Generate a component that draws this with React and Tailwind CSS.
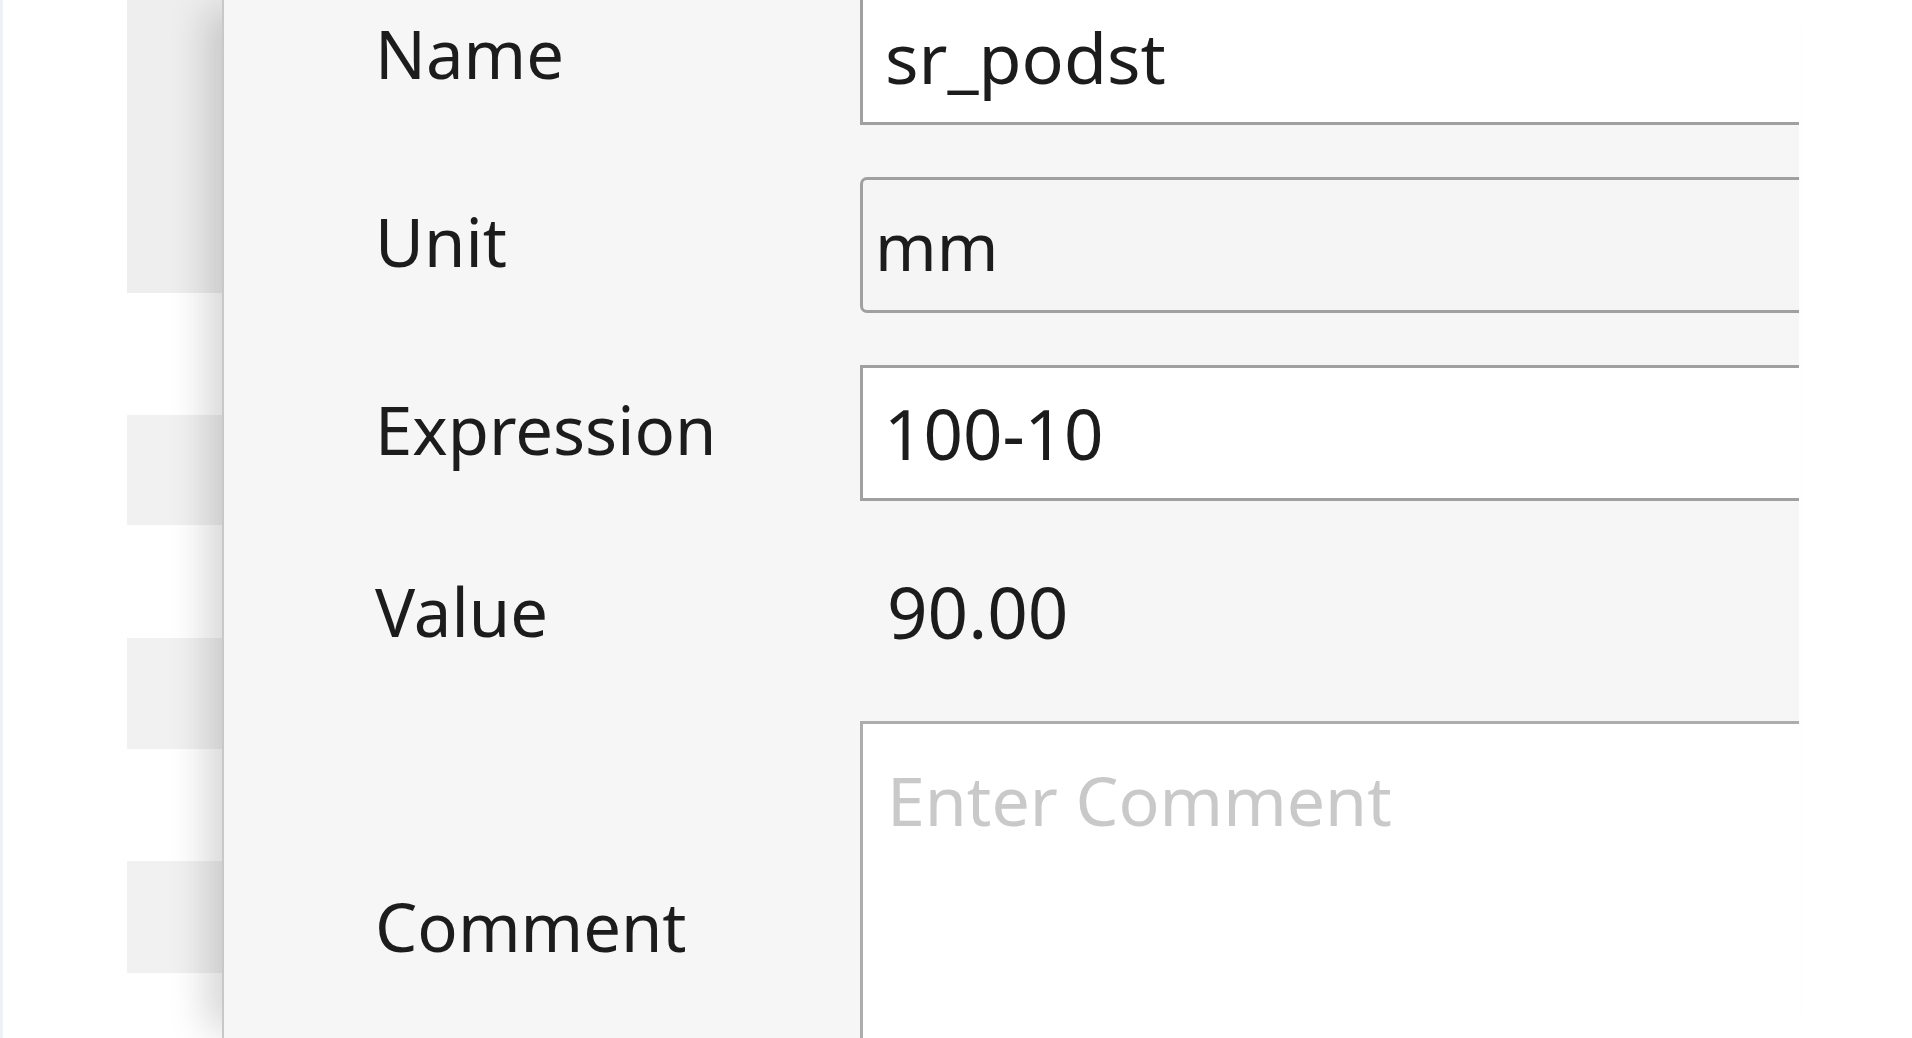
import React from 'react';

const stripes = [
  { h: 'h-[293px]', bg: 'bg-[#eeeeee]' },
  { h: 'h-[122px]', bg: 'bg-white' },
  { h: 'h-[110px]', bg: 'bg-[#f1f1f1]' },
  { h: 'h-[113px]', bg: 'bg-white' },
  { h: 'h-[111px]', bg: 'bg-[#f1f1f1]' },
  { h: 'h-[112px]', bg: 'bg-white' },
  { h: 'h-[112px]', bg: 'bg-[#f1f1f1]' },
  { h: 'h-[120px]', bg: 'bg-white' },
];

const Label = ({ children, className = '' }) => (
  <div className={`w-[485px] shrink-0 text-[67px] leading-none text-[#1c1c1c] ${className}`}>
    {children}
  </div>
);

const ParameterForm = () => (
  <div className="flex-1 flex flex-col pl-[151px] -mt-[11px]">
    <div className="flex items-center shrink-0 h-[136px]">
      <Label className="pb-[7px]">Name</Label>
      <input
        readOnly
        value="sr_podst"
        className="w-[980px] shrink-0 h-[136px] bg-white border-[3px] border-[#a0a0a0] pl-[22px] text-[70px] text-[#1c1c1c] outline-none"
      />
    </div>

    <div className="flex items-center shrink-0 h-[136px] mt-[52px]">
      <Label className="pb-[7px]">Unit</Label>
      <input
        readOnly
        value="mm"
        className="w-[980px] shrink-0 h-[136px] bg-[#f5f5f5] border-[3px] border-[#a0a0a0] rounded-[7px] pl-[12px] text-[66px] text-[#1c1c1c] outline-none"
      />
    </div>

    <div className="flex items-center shrink-0 h-[136px] mt-[52px]">
      <Label className="pb-[7px]">Expression</Label>
      <input
        readOnly
        value="100-10"
        className="w-[980px] shrink-0 h-[136px] bg-white border-[3px] border-[#a0a0a0] pl-[21px] text-[69px] text-[#1c1c1c] outline-none"
      />
    </div>

    <div className="flex items-center shrink-0 h-[220px]">
      <Label>Value</Label>
      <div className="pl-[27px] text-[71px] leading-none text-[#1c1c1c]">90.00</div>
    </div>

    <div className="flex items-center shrink-0 h-[410px]">
      <Label>Comment</Label>
      <textarea
        readOnly
        placeholder="Enter Comment"
        className="w-[980px] shrink-0 h-[410px] resize-none bg-white border-[3px] border-[#adadad] pl-[24px] pt-[25px] text-[68px] leading-normal text-[#1c1c1c] placeholder:text-[#c9c9c9] outline-none"
      />
    </div>
  </div>
);

export default function App() {
  return (
    <div className="w-[1912px] h-[1038px] overflow-hidden flex bg-white font-['Noto_Sans',sans-serif]">
      <div className="w-[3px] shrink-0 bg-[#eef1f6]" />
      <div className="w-[124px] shrink-0 bg-white" />
      <div className="w-[95px] shrink-0 flex flex-col">
        {stripes.map((s, i) => (
          <div key={i} className={`${s.h} shrink-0 ${s.bg}`} />
        ))}
      </div>
      <div className="relative w-[1577px] shrink-0 h-full overflow-hidden bg-[#f6f6f6] border-l-2 border-[#c8c8c8] shadow-[-24px_0_36px_-8px_rgba(0,0,0,0.16)] flex">
        <ParameterForm />
      </div>
      <div className="flex-1 bg-white" />
    </div>
  );
}
